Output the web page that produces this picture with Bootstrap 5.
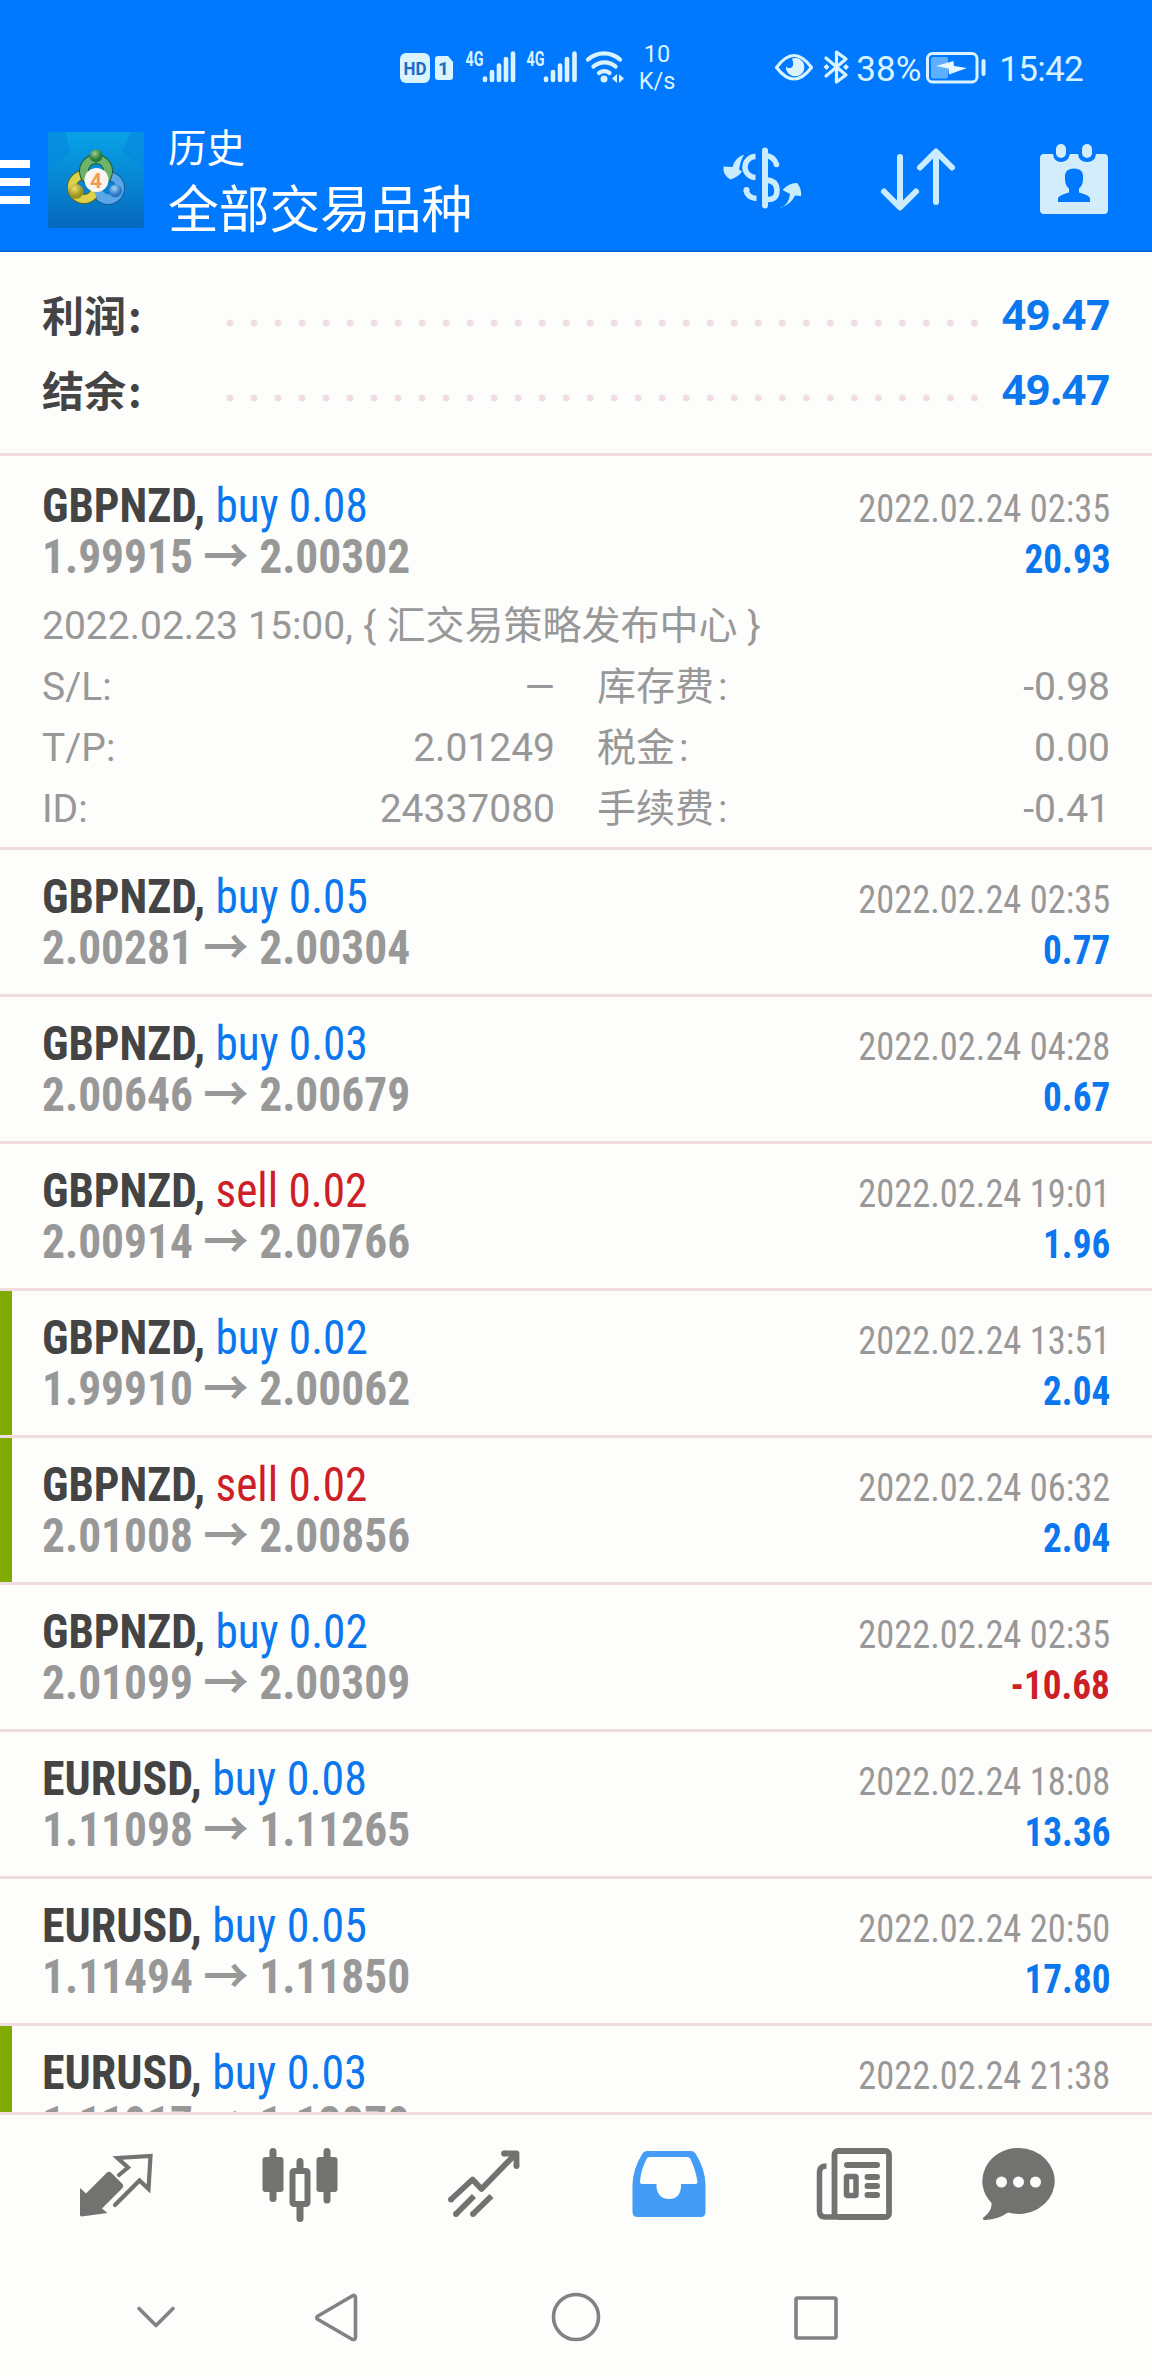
<!DOCTYPE html>
<html lang="zh-CN">
<head>
<meta charset="utf-8">
<meta name="viewport" content="width=device-width, initial-scale=1">
<title>历史</title>
<link href="https://cdn.jsdelivr.net/npm/bootstrap@5.3.0/dist/css/bootstrap.min.css" rel="stylesheet">
<style>
  :root { --ui: Roboto, "Noto Sans CJK SC", sans-serif; --cjk: "Noto Sans CJK SC", sans-serif; --ice: #d9f3ff; --line: #f0dde2; }
  body { background: #fdfdfc; font-family: var(--ui); color: #444; }
  .screen { width: 1152px; height: 2376px; }
  svg { display: block; flex: none; }
  .top-area { height: 252px; background: #0079ff; border-bottom: 2px solid #0068d4; }
  .status { height: 110px; padding: 24px 69px 0 400px; color: var(--ice); }
  .net-speed { width: 48px; font-size: 23.5px; line-height: 27px; margin-left: 3px; padding-top: 17px; }
  .clock { font-size: 35px; line-height: 40px; font-stretch: 88%; padding-top: 26px; }
  .clock.hours { margin-left: 12px; letter-spacing: -.7px; }
  .app-bar { height: 140px; }
  .titles { padding: 7px 0 0 24px; }
  .title-a { font: 38.5px/56px var(--cjk); }
  .title-b { font: 50.7px/60px var(--cjk); padding-top: 3px; }
  .totals { height: 204px; padding: 28px 42px 0 42px; border-bottom: 3px solid var(--line); }
  .totals .line { height: 75px; }
  .totals .lab { width: 175.5px; font: 700 42px/75px var(--cjk); margin-top: -8px; }
  .totals .val { font: 700 42px/75px "Noto Sans", sans-serif; margin-top: -8px; }
  .leader { height: 24px; width: 768px; margin-top: 10px; background: radial-gradient(circle at 12px 12px, #f1dce1 3.1px, transparent 3.9px) 0 0 / 24.03px 24px repeat-x; }
  .c-blue { color: #0a77ee; }
  .c-red { color: #cd2026; }
  .c-gray { color: #989898; }
  .deal { padding: 21px 42px 0; border-bottom: 3px solid var(--line); height: 147px; }
  .deal.open { height: 394px; padding-top: 24px; }
  .deal.tagged { background: linear-gradient(#7eac00, #7eac00) 0 0 / 12px 100% no-repeat padding-box; }
  .deal .line { height: 51px; line-height: 51px; }
  .deal .line > span { white-space: pre; font-stretch: 75%; }
  .sym { font-size: 48px; transform: scaleX(.942); transform-origin: left; }
  .sym.eur { transform: scaleX(.957); }
  .price { font-size: 48px; font-weight: 700; transform: scaleX(.946); transform-origin: left; }
  .when { font-size: 39.5px; transform: scaleX(.922); transform-origin: right; }
  .gain { font-size: 40px; font-weight: 700; transform: scaleX(.93); transform-origin: right; }
  .info { font-size: 39px; line-height: 61px; margin-top: 14px; }
  .info .half-l { width: 513px; }
  .info .half-r { width: 513px; }
  .info .memo { word-spacing: .5px; }
  .colon { padding-left: 4px; }
  .lab .colon { padding-left: 2px; }
  .deals { height: 1656px; }
  .tabs { height: 158px; padding: 33px 0 0 74px; border-top: 3px solid var(--line); gap: 100.5px; }
  .tabs svg { width: 84px; height: 78px; }
  .tabs svg:last-child { margin-left: -20px; }
  .sysnav { height: 106px; padding: 18px 0 0 126px; }
</style>
<script src="https://cdn.jsdelivr.net/npm/bootstrap@5.3.0/dist/js/bootstrap.bundle.min.js"></script>
</head>
<body>
<div class="screen d-flex flex-column overflow-hidden">

  <header class="top-area flex-shrink-0">
    <div class="status d-flex align-items-start">
      <!-- HD / SIM badges, two 4G meters, wifi -->
      <svg width="230" height="86" viewBox="400 24 230 86" fill="#d9f3ff">
        <rect x="400" y="53" width="30" height="30" rx="6"/>
        <text x="415" y="75" font-family="Roboto" font-weight="700" font-size="19" text-anchor="middle" fill="#1a6cc4" textLength="23" lengthAdjust="spacingAndGlyphs">HD</text>
        <path d="M438 56h10l5 6v15a3 3 0 0 1-3 3h-12a3 3 0 0 1-3-3V59a3 3 0 0 1 3-3z"/>
        <text x="443.500" y="75" font-family="Roboto" font-weight="700" font-size="19" text-anchor="middle" fill="#1a6cc4">1</text>
        <text x="465.500" y="66" font-family="Roboto" font-weight="700" font-size="19.500" textLength="18" lengthAdjust="spacingAndGlyphs">4G</text>
        <text x="526.500" y="66" font-family="Roboto" font-weight="700" font-size="19.500" textLength="18" lengthAdjust="spacingAndGlyphs">4G</text>
        <g stroke="#d9f3ff" stroke-width="4.600" stroke-linecap="round">
          <path d="M485 78.500v1.500M492 72v8M499 65.500V80M506 59v21M513 53.500V80M546 78.500v1.500M553 72v8M560 65.500V80M567 59v21M574.500 53.500V80"/>
        </g>
        <g fill="none" stroke="#d9f3ff" stroke-width="4.300" stroke-linecap="round">
          <path d="M588 59.500a24 24 0 0 1 32 0M593.500 66.500a16.500 16.500 0 0 1 22 0M599 73a9 9 0 0 1 10.500 0"/>
        </g>
        <circle cx="604" cy="79" r="3.500"/>
        <path d="M617 74v9l-5-4.500zM619 74v9l5-4.500z"/>
      </svg>
      <div class="net-speed text-center"><div>10</div><div>K/s</div></div>
      <svg class="ms-auto" width="78" height="86" viewBox="776 24 78 86" fill="none" stroke="#d9f3ff">
        <path d="M778.500 67.500q17.500-24 35 0q-17.500 23-35 0z" stroke-width="3.200" stroke-linejoin="round"/>
        <path d="M794 58.500a9.200 9.200 0 1 1-6 8q1 2 4.500 1.500q4.500-2 1.500-9.500z" fill="#d9f3ff" stroke="none"/>
        <path d="M828 58l20 17-9.500 7V52l9.500 7-20 17" stroke-width="3.200" stroke-linejoin="round" stroke-linecap="round"/>
        <path d="M825.500 67l3-3 3 3-3 3zM845 67l3-3 3 3-3 3z" fill="#d9f3ff" stroke="none"/>
      </svg>
      <span class="clock ms-1">38%</span>
      <svg class="ms-1" width="62" height="86" viewBox="927 24 62 86">
        <rect x="929.500" y="53.500" width="49.500" height="28.500" rx="5" fill="none" stroke="#d9f3ff" stroke-width="3"/>
        <rect x="933" y="57" width="17" height="21.500" rx="2" fill="#5eb0ff"/>
        <path d="M938 66l17.500-5 .5 5 13 2-18 6.500-.5-6z" fill="#e6f8ff"/>
        <path d="M985.500 61v13" stroke="#d9f3ff" stroke-width="4" stroke-linecap="round"/>
      </svg>
      <span class="clock hours">15:42</span>
    </div>

    <div class="app-bar d-flex align-items-start text-white">
      <svg width="48" height="140" viewBox="0 110 48 140" fill="#fff"><path d="M0 160h30v8H0zM0 178h30v8H0zM0 196h30v8H0z"/></svg>
      <svg width="96" height="140" viewBox="48 110 96 140">
        <defs>
          <linearGradient id="tile" x1="0" y1="0" x2="0" y2="1"><stop offset="0" stop-color="#08a3e8"/><stop offset=".5" stop-color="#0786d2"/><stop offset="1" stop-color="#0668bd"/></linearGradient>
          <radialGradient id="gn" cx=".4" cy=".3"><stop offset="0" stop-color="#9bd08c"/><stop offset="1" stop-color="#2a7a3c"/></radialGradient>
          <radialGradient id="ye" cx=".4" cy=".3"><stop offset="0" stop-color="#eee270"/><stop offset="1" stop-color="#9c9420"/></radialGradient>
          <radialGradient id="bl" cx=".4" cy=".3"><stop offset="0" stop-color="#a5d6f8"/><stop offset="1" stop-color="#2a78c6"/></radialGradient>
        </defs>
        <rect x="48" y="132" width="96" height="96" rx="2" fill="url(#tile)"/>
        <path d="M48 132h18l4 22-22 14zM144 132h-14l-8 20 22 16z" fill="#0786dd" opacity=".6"/>
        <g fill="none" stroke-width="8">
          <circle cx="108" cy="188" r="12" stroke="#175a9c" stroke-width="10"/><circle cx="108" cy="188" r="12" stroke="#5ba6e6"/>
          <circle cx="84" cy="187" r="12" stroke="#5e6d20" stroke-width="10"/><circle cx="84" cy="187" r="12" stroke="#dbd24a"/>
          <circle cx="96" cy="171" r="12" stroke="#1c5c34" stroke-width="10"/><circle cx="96" cy="171" r="12" stroke="#6db36a"/>
          <path d="M98 191a12 12 0 0 0 17 6" stroke="#5ba6e6"/>
        </g>
        <circle cx="96" cy="156" r="6.500" fill="url(#gn)"/><circle cx="76" cy="191.500" r="7.500" fill="url(#ye)"/><circle cx="115.500" cy="191" r="6.500" fill="url(#bl)"/>
        <circle cx="96.500" cy="180" r="12" fill="#fbf5f2"/>
        <text x="96" y="187.500" font-family="Roboto" font-weight="700" font-size="21" text-anchor="middle" fill="#f59a55">4</text>
      </svg>
      <div class="titles">
        <div class="title-a">历史</div>
        <div class="title-b">全部交易品种</div>
      </div>
      <svg class="ms-auto" width="432" height="140" viewBox="720 110 432 140" fill="#c9ecff" stroke="#c9ecff">
        <!-- currency with swap arrows -->
        <g stroke="none">
          <path d="M744 154.500q-9 3-11.500 12.500l-9-.500q-1 9 7 13q8-2.500 11.500-8l-3-2q1-8 5-15z"/>
          <path d="M780 208q9-3 10-14l-7.500-4q7-7.500 14.500-7q5 6 4 13l-6-.500q-4 9-15 12.500z"/>
        </g>
        <path d="M765 150.500v55" stroke-width="6" stroke-linecap="round" fill="none"/>
        <path d="M755.500 156.500a10.500 10.500 0 0 0 0 21M766 155.500q8 1 10.500 9M746 190q1.500 8 10.500 8.500M766 180q11 .5 11 10.500t-11 9" fill="none" stroke-width="5.500"/>
        <circle cx="776.500" cy="164.500" r="2.800" stroke="none"/><circle cx="746.500" cy="190" r="3" stroke="none"/>
        <!-- sort -->
        <path d="M900 157v50M884 191.500l16 16 16-16M936 202v-50M920 167.500l16-16 16 16" fill="none" stroke-width="6" stroke-linecap="round" stroke-linejoin="round"/>
        <!-- calendar -->
        <g stroke="none" fill="#d3edfc">
          <path fill-rule="evenodd" d="M1044 154h9q1 8 8 8t9-8h8q1 8 9 8t9-8h8q4 0 4 4v52q0 4-4 4h-60q-4 0-4-4v-52q0-4 4-4zM1074 168.500q-10 0-9 10q0 7 4 10v4q-11 3-11 6v3.500h32v-3.500q0-3-11-6v-4q4-3 4-10q1-10-9-10z"/>
          <rect x="1056" y="144" width="10" height="14" rx="5"/><rect x="1082" y="144" width="10" height="14" rx="5"/>
        </g>
      </svg>
    </div>
  </header>

  <section class="totals flex-shrink-0">
    <div class="line d-flex align-items-center"><span class="lab">利润<span class="colon">:</span></span><span class="leader"></span><span class="val c-blue ms-auto">49.47</span></div>
    <div class="line d-flex align-items-center"><span class="lab">结余<span class="colon">:</span></span><span class="leader"></span><span class="val c-blue ms-auto">49.47</span></div>
  </section>

  <main class="deals flex-shrink-0 overflow-hidden">
    <article class="deal open">
      <div class="line d-flex justify-content-between align-items-baseline"><span class="sym"><b>GBPNZD,</b> <span class="c-blue">buy 0.08</span></span><span class="when c-gray">2022.02.24 02:35</span></div>
      <div class="line d-flex justify-content-between align-items-baseline"><span class="price c-gray">1.99915 → 2.00302</span><span class="gain c-blue">20.93</span></div>
      <div class="info c-gray">
        <div class="memo">2022.02.23 15:00, { 汇交易策略发布中心 }</div>
        <div class="d-flex justify-content-between"><div class="half-l d-flex justify-content-between"><span>S/L:</span><span>—</span></div><div class="half-r d-flex justify-content-between"><span>库存费<span class="colon">:</span></span><span>-0.98</span></div></div>
        <div class="d-flex justify-content-between"><div class="half-l d-flex justify-content-between"><span>T/P:</span><span>2.01249</span></div><div class="half-r d-flex justify-content-between"><span>税金<span class="colon">:</span></span><span>0.00</span></div></div>
        <div class="d-flex justify-content-between"><div class="half-l d-flex justify-content-between"><span>ID:</span><span>24337080</span></div><div class="half-r d-flex justify-content-between"><span>手续费<span class="colon">:</span></span><span>-0.41</span></div></div>
      </div>
    </article>
    <article class="deal">
      <div class="line d-flex justify-content-between align-items-baseline"><span class="sym"><b>GBPNZD,</b> <span class="c-blue">buy 0.05</span></span><span class="when c-gray">2022.02.24 02:35</span></div>
      <div class="line d-flex justify-content-between align-items-baseline"><span class="price c-gray">2.00281 → 2.00304</span><span class="gain c-blue">0.77</span></div>
    </article>
    <article class="deal">
      <div class="line d-flex justify-content-between align-items-baseline"><span class="sym"><b>GBPNZD,</b> <span class="c-blue">buy 0.03</span></span><span class="when c-gray">2022.02.24 04:28</span></div>
      <div class="line d-flex justify-content-between align-items-baseline"><span class="price c-gray">2.00646 → 2.00679</span><span class="gain c-blue">0.67</span></div>
    </article>
    <article class="deal">
      <div class="line d-flex justify-content-between align-items-baseline"><span class="sym"><b>GBPNZD,</b> <span class="c-red">sell 0.02</span></span><span class="when c-gray">2022.02.24 19:01</span></div>
      <div class="line d-flex justify-content-between align-items-baseline"><span class="price c-gray">2.00914 → 2.00766</span><span class="gain c-blue">1.96</span></div>
    </article>
    <article class="deal tagged">
      <div class="line d-flex justify-content-between align-items-baseline"><span class="sym"><b>GBPNZD,</b> <span class="c-blue">buy 0.02</span></span><span class="when c-gray">2022.02.24 13:51</span></div>
      <div class="line d-flex justify-content-between align-items-baseline"><span class="price c-gray">1.99910 → 2.00062</span><span class="gain c-blue">2.04</span></div>
    </article>
    <article class="deal tagged">
      <div class="line d-flex justify-content-between align-items-baseline"><span class="sym"><b>GBPNZD,</b> <span class="c-red">sell 0.02</span></span><span class="when c-gray">2022.02.24 06:32</span></div>
      <div class="line d-flex justify-content-between align-items-baseline"><span class="price c-gray">2.01008 → 2.00856</span><span class="gain c-blue">2.04</span></div>
    </article>
    <article class="deal">
      <div class="line d-flex justify-content-between align-items-baseline"><span class="sym"><b>GBPNZD,</b> <span class="c-blue">buy 0.02</span></span><span class="when c-gray">2022.02.24 02:35</span></div>
      <div class="line d-flex justify-content-between align-items-baseline"><span class="price c-gray">2.01099 → 2.00309</span><span class="gain c-red">-10.68</span></div>
    </article>
    <article class="deal">
      <div class="line d-flex justify-content-between align-items-baseline"><span class="sym eur"><b>EURUSD,</b> <span class="c-blue">buy 0.08</span></span><span class="when c-gray">2022.02.24 18:08</span></div>
      <div class="line d-flex justify-content-between align-items-baseline"><span class="price c-gray">1.11098 → 1.11265</span><span class="gain c-blue">13.36</span></div>
    </article>
    <article class="deal">
      <div class="line d-flex justify-content-between align-items-baseline"><span class="sym eur"><b>EURUSD,</b> <span class="c-blue">buy 0.05</span></span><span class="when c-gray">2022.02.24 20:50</span></div>
      <div class="line d-flex justify-content-between align-items-baseline"><span class="price c-gray">1.11494 → 1.11850</span><span class="gain c-blue">17.80</span></div>
    </article>
    <article class="deal tagged">
      <div class="line d-flex justify-content-between align-items-baseline"><span class="sym eur"><b>EURUSD,</b> <span class="c-blue">buy 0.03</span></span><span class="when c-gray">2022.02.24 21:38</span></div>
      <div class="line d-flex justify-content-between align-items-baseline"><span class="price c-gray">1.11917 → 1.12079</span></div>
    </article>
  </main>

  <nav class="tabs d-flex flex-shrink-0">
    <svg viewBox="74 2148 84 78">
      <path d="M80 2188l6 5.500 20.500-20.500q2.500-2.500 5 0l10.500 10.500q2.500 2.500 0 5L102 2208.500l5.500 4.500-26 3.500q-1.500 0-1.500-2z" fill="#727270"/>
      <path d="M119 2175l9-7.500-10.500-9.500 33-2-2 33-9-8.500-24.500 24.500" fill="none" stroke="#727270" stroke-width="4.200" stroke-linecap="round"/>
    </svg>
    <svg viewBox="258.500 2148 84 78">
      <g fill="#727270"><rect x="262" y="2157" width="21" height="35" rx="3"/><rect x="316" y="2157" width="21" height="35" rx="3"/></g>
      <path d="M272.500 2151.500v47M326.500 2151.500v48.500M299.500 2161.500v8M299.500 2206v12.500" stroke="#727270" stroke-width="7" stroke-linecap="round"/>
      <rect x="292" y="2171" width="15" height="33" rx="1.500" fill="none" stroke="#727270" stroke-width="6"/>
    </svg>
    <svg viewBox="443 2148 84 78">
      <path d="M451 2199.500l21.500-20 9 9.500 34-35M503.500 2153.500h13v13M456 2214l18-18M473 2214l18.500-18" fill="none" stroke="#727270" stroke-width="5.800" stroke-linejoin="round"/>
      <circle cx="451" cy="2199.500" r="2.900" fill="#727270"/><circle cx="456" cy="2214" r="2.900" fill="#727270"/><circle cx="473" cy="2214" r="2.900" fill="#727270"/><circle cx="504" cy="2153.500" r="2.900" fill="#727270"/><circle cx="516.500" cy="2166" r="2.900" fill="#727270"/>
    </svg>
    <svg viewBox="627.500 2148 84 78">
      <path fill="#439cf5" fill-rule="evenodd" d="M646 2151h45q2.500 0 4 2.500 9.500 15 10 31V2212q0 5-5 5h-63q-5 0-5-5v-27.500q.5-16 10-31 1.500-2.500 4-2.500zM649 2157q-2 0-3 2-6 12-6.500 23 0 2 2 2H656v3q1.500 12 12.500 12t12-12v-3H695q2 0 2-2-1.500-11-7-23-1-2-3-2z"/>
    </svg>
    <svg viewBox="812 2148 84 78">
      <g fill="none" stroke="#727270">
        <rect x="834.500" y="2151" width="54.500" height="66" rx="3.500" stroke-width="5.800"/>
        <path d="M826.500 2166q-7 0-7 6v39q0 6 6 6h10" stroke-width="5.500"/>
        <path d="M847 2165h30M867.500 2177h9.500M867.500 2186h9.500M867.500 2195h9.500" stroke-width="6" stroke-linecap="round"/>
        <rect x="846.500" y="2176.500" width="9.500" height="19" rx="1" stroke-width="5.500"/>
      </g>
    </svg>
    <svg viewBox="976.500 2148 84 78">
      <path d="M1018 2148a36 33 0 1 1-10.500 64.500q-10 7-22.500 7.500-4 0-2-2.500 9-7 8-14.500a36 33 0 0 1 27-55z" fill="#727270"/>
      <g fill="#fdfdfc"><circle cx="1001" cy="2182" r="5.500"/><circle cx="1018" cy="2182" r="5.500"/><circle cx="1035" cy="2182" r="5.500"/></g>
    </svg>
  </nav>

  <div class="sysnav d-flex flex-shrink-0">
    <svg width="720" height="60" viewBox="126 2288 720 60" fill="none" stroke="#838383" stroke-width="3.600" stroke-linejoin="round" stroke-linecap="round">
      <path d="M139 2308.500l17 17 17-17"/>
      <path d="M353 2295.500q2.500-.5 2.500 2.500v39q0 3-3 2.500l-34.500-20q-2.500-1.500 0-3.500z"/>
      <circle cx="576" cy="2317" r="22.500"/>
      <rect x="796" y="2298" width="40" height="40" rx="1.500"/>
    </svg>
  </div>
</div>
</body>
</html>
